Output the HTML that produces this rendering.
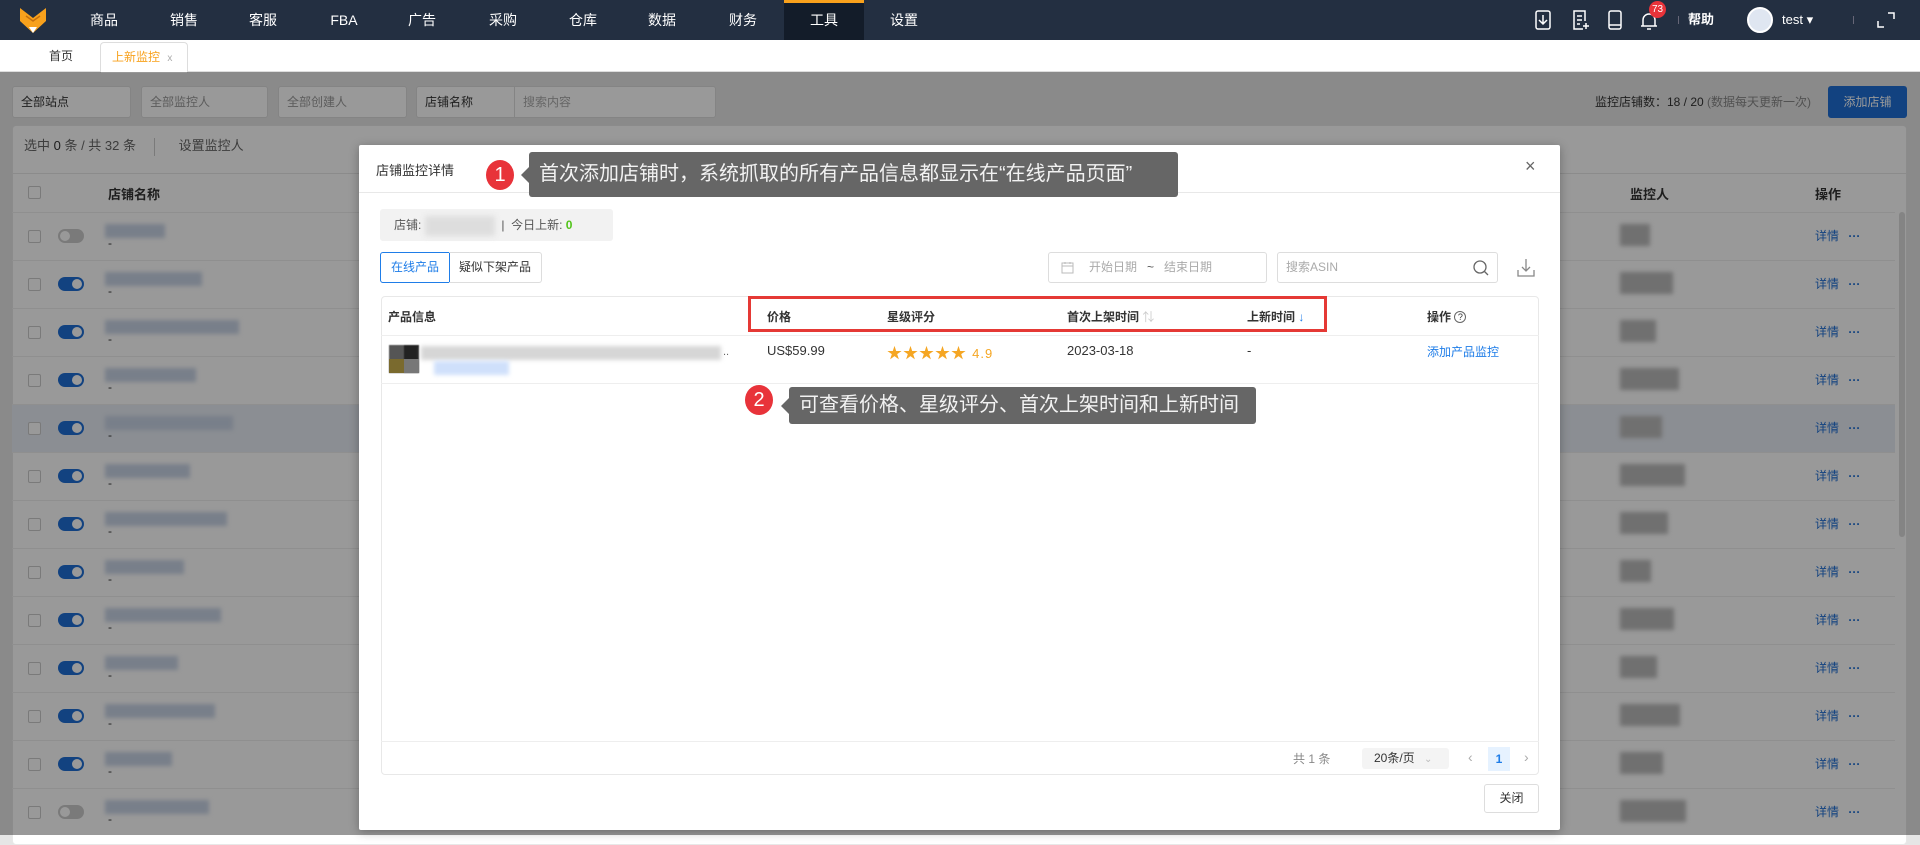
<!DOCTYPE html>
<html><head><meta charset="utf-8">
<style>
*{box-sizing:border-box;margin:0;padding:0}
body{width:1920px;height:835px;overflow:hidden;position:relative;font-family:"Liberation Sans","Noto Sans CJK SC",sans-serif;font-size:13px;color:#333;background:#e6e6e6}
.abs{position:absolute}
.nav{left:0;top:0;width:1920px;height:40px;background:#232f41}
.nav .it{position:absolute;top:0;height:40px;line-height:40px;width:80px;text-align:center;color:#fff;font-size:14px}
.tabs{top:40px;left:0;width:1920px;height:32px;background:#fff;border-bottom:1px solid #ddd}
.sel{height:32px;border:1px solid #dcdcdc;border-radius:3px;background:#fff;color:#999;font-size:12px;line-height:30px;padding-left:8px}
.card{left:12px;top:125px;width:1895px;height:720px;background:#fff;border:1px solid #e8e8e8;border-radius:4px}
.row{position:absolute;left:12px;width:1883px;height:48px;border-top:1px solid #eee}
.cb{position:absolute;left:28px;width:13px;height:13px;border:1px solid #ccc;border-radius:2px;background:#fff}
.tg{position:absolute;left:58px;width:26px;height:14px;border-radius:7px;background:#1f6fd6}
.tg:after{content:"";position:absolute;right:2px;top:2px;width:10px;height:10px;border-radius:5px;background:#fff}
.tg.off{background:#ccc}.tg.off:after{right:auto;left:2px}
.blur{position:absolute;background:#c9d4e6;filter:blur(2px)}
.gb{position:absolute;background:#bbb;filter:blur(2px)}
.overlay{left:0;top:72px;width:1920px;height:763px;background:rgba(0,0,0,.4)}
.modal{left:359px;top:145px;width:1201px;height:685px;background:#fff;border-radius:2px;box-shadow:0 2px 10px rgba(0,0,0,.3)}
.tip{background:#666;color:#f2f2f2;font-size:20px;border-radius:3px;padding-left:10px}
.tip:before{content:"";position:absolute;left:-8px;top:50%;margin-top:-8px;border:8px solid transparent;border-left:0;border-right-color:#666}
.num{width:28px;height:30px;border-radius:50%;background:#e8333a;color:#fff;font-size:20px;text-align:center;line-height:30px}
.star{color:#f5a623;font-size:15px;letter-spacing:1px}
</style></head><body>
<div class="abs nav">
  <svg class="abs" style="left:20px;top:8px" width="26" height="25" viewBox="0 0 26 25"><path d="M0 0 L13 10 L26 0 L26 13 L13 25 L0 13Z" fill="#f8a11c"/><path d="M9 19 L13 25 L17 19Z" fill="#fff"/><path d="M6 8 L13 13 L20 8" stroke="#c5700c" stroke-width="1.5" fill="none"/></svg>
  <div class="it" style="left:64px">商品</div><div class="it" style="left:144px">销售</div><div class="it" style="left:223px">客服</div><div class="it" style="left:304px">FBA</div><div class="it" style="left:382px">广告</div><div class="it" style="left:463px">采购</div><div class="it" style="left:543px">仓库</div><div class="it" style="left:622px">数据</div><div class="it" style="left:703px">财务</div>
  <div class="it" style="left:784px;background:#131c29;border-top:3px solid #f8a11c;line-height:34px">工具</div>
  <div class="it" style="left:864px">设置</div>
  <svg class="abs" style="left:1533px;top:10px" width="20" height="20" viewBox="0 0 20 20" fill="none" stroke="#fff" stroke-width="1.5"><rect x="3" y="1" width="14" height="18" rx="2"/><path d="M10 5v9M6 10l4 4 4-4"/></svg>
  <svg class="abs" style="left:1571px;top:10px" width="20" height="20" viewBox="0 0 20 20" fill="none" stroke="#fff" stroke-width="1.5"><path d="M12 19H3V1h11v10"/><path d="M6 6h5M6 10h5M6 14h3M15 13v6M12 16h6"/></svg>
  <svg class="abs" style="left:1606px;top:10px" width="18" height="20" viewBox="0 0 18 20" fill="none" stroke="#fff" stroke-width="1.5"><rect x="3" y="1" width="12" height="18" rx="2"/><path d="M3 15h12"/></svg>
  <svg class="abs" style="left:1640px;top:11px" width="18" height="20" viewBox="0 0 18 20" fill="none" stroke="#fff" stroke-width="1.5"><path d="M3 15V9a6 6 0 0 1 12 0v6zM1 15h16M7 18h4"/></svg>
  <div class="abs" style="left:1649px;top:1px;width:17px;height:17px;border-radius:9px;background:#e8333a;color:#fff;font-size:10px;text-align:center;line-height:17px">73</div>
  <div class="abs" style="left:1688px;top:0;line-height:40px;color:#fff;font-size:13px;font-weight:bold">帮助</div>
  <div class="abs" style="left:1678px;top:16px;width:1px;height:8px;background:#667"></div>
  <div class="abs" style="left:1747px;top:7px;width:26px;height:26px;border-radius:13px;background:#dfe6f1;border:2px solid #fff"></div>
  <div class="abs" style="left:1782px;top:0;line-height:40px;color:#fff;font-size:13px">test ▾</div>
  <div class="abs" style="left:1853px;top:16px;width:1px;height:8px;background:#667"></div>
  <svg class="abs" style="left:1877px;top:12px" width="18" height="16" viewBox="0 0 18 16" fill="none" stroke="#fff" stroke-width="1.5"><path d="M11 1h6v6M1 9v6h6"/></svg>
</div>
<div class="abs tabs">
  <div class="abs" style="left:49px;top:0;line-height:32px;font-size:12px">首页</div>
  <div class="abs" style="left:100px;top:2px;width:88px;height:31px;background:#fff;border:1px solid #ddd;border-bottom:none;border-radius:4px 4px 0 0;color:#f8a11c;font-size:12px;line-height:28px;padding-left:11px">上新监控 <span style="color:#aaa;font-size:10px;margin-left:4px">x</span></div>
</div>
<!-- background page -->
<div class="abs sel" style="left:12px;top:86px;width:119px;color:#333">全部站点</div>
<div class="abs sel" style="left:141px;top:86px;width:127px">全部监控人</div>
<div class="abs sel" style="left:278px;top:86px;width:129px">全部创建人</div>
<div class="abs sel" style="left:416px;top:86px;width:300px;color:#333">店铺名称<span style="position:absolute;left:97px;top:0;height:30px;border-left:1px solid #ddd;padding-left:8px;color:#aaa">搜索内容</span></div>
<div class="abs" style="left:1595px;top:86px;line-height:32px;font-size:12px">监控店铺数：18 / 20 <span style="color:#888">(数据每天更新一次)</span></div>
<div class="abs" style="left:1828px;top:86px;width:79px;height:32px;background:#1f6fd6;color:#fff;border-radius:3px;text-align:center;line-height:32px;font-size:12px">添加店铺</div>
<div class="abs card"></div>
<div class="abs" style="left:24px;top:134px;line-height:24px;font-size:13px;color:#666">选中 <b style="color:#333;font-weight:normal">0</b> 条 / 共 32 条 <span style="display:inline-block;width:1px;height:18px;background:#ccc;vertical-align:middle;margin:0 24px 0 14px"></span>设置监控人</div>
<div class="abs" style="left:12px;top:173px;width:1895px;height:1px;background:#e8e8e8"></div>
<div class="cb" style="top:186px"></div>
<div class="abs" style="left:108px;top:184px;font-weight:bold;font-size:13px">店铺名称</div>
<div class="abs" style="left:1630px;top:184px;font-weight:bold;font-size:13px">监控人</div>
<div class="abs" style="left:1815px;top:184px;font-weight:bold;font-size:13px">操作</div>
<div id="rows"></div>
<div class="abs" style="left:1899px;top:212px;width:6px;height:325px;background:#ddd;border-radius:3px"></div>
<script>
var h='';for(var i=0;i<13;i++){var y=212+48*i;h+='<div class="row" style="top:'+y+'px;'+(i==4?'background:#e8edf5':'')+'"></div><div class="cb" style="top:'+(y+18)+'px"></div><div class="tg'+(i==0||i==12?' off':'')+'" style="top:'+(y+17)+'px"></div><div class="blur" style="left:105px;top:'+(y+12)+'px;width:'+(60+((i*37)%80))+'px;height:14px"></div><div class="abs" style="left:108px;top:'+(y+24)+'px;font-size:12px">-</div><div class="gb" style="left:1620px;top:'+(y+12)+'px;width:'+(30+((i*23)%40))+'px;height:22px"></div><div class="abs" style="left:1815px;top:'+(y+15)+'px;color:#1f6fd6;font-size:12px">详情 <b style="margin-left:6px">···</b></div>';}
document.getElementById('rows').innerHTML=h;
</script>
<div class="abs overlay"></div>
<!-- modal -->
<div class="abs modal">
  <div class="abs" style="left:17px;top:15px;font-size:13px">店铺监控详情</div>
  <div class="abs" style="left:1166px;top:11px;font-size:18px;color:#666">×</div>
  <div class="abs" style="left:0;top:47px;width:1201px;height:1px;background:#e8e8e8"></div>
  <div class="abs" style="left:21px;top:64px;width:233px;height:32px;background:#f2f2f2;border-radius:3px;line-height:32px;padding-left:14px;font-size:12px;color:#555">店铺: <span style="display:inline-block;width:70px;height:20px;vertical-align:middle;background:#ddd;filter:blur(3px)"></span>&nbsp; |&nbsp; 今日上新: <b style="color:#52c41a">0</b></div>
  <div class="abs" style="left:21px;top:107px;width:70px;height:31px;border:1px solid #1f7de8;border-radius:3px 0 0 3px;color:#1f7de8;font-size:12px;text-align:center;line-height:29px">在线产品</div>
  <div class="abs" style="left:90px;top:107px;width:93px;height:31px;border:1px solid #ddd;border-left:none;border-radius:0 3px 3px 0;font-size:12px;text-align:center;line-height:29px">疑似下架产品</div>
  <div class="abs" style="left:689px;top:107px;width:219px;height:31px;border:1px solid #ddd;border-radius:3px;color:#aaa;font-size:12px;line-height:29px;padding-left:40px">开始日期 &nbsp;&nbsp;<span style="color:#555">~</span>&nbsp;&nbsp; 结束日期
    <svg style="position:absolute;left:12px;top:8px" width="13" height="13" viewBox="0 0 13 13" fill="none" stroke="#bbb"><rect x="1" y="2" width="11" height="10"/><path d="M1 5h11M4 1v2M9 1v2"/></svg></div>
  <div class="abs" style="left:918px;top:107px;width:221px;height:31px;border:1px solid #ddd;border-radius:3px;color:#aaa;font-size:12px;line-height:29px;padding-left:8px">搜索ASIN
    <svg style="position:absolute;right:8px;top:7px" width="16" height="16" viewBox="0 0 16 16" fill="none" stroke="#666" stroke-width="1.3"><circle cx="7" cy="7" r="6"/><path d="M11.5 11.5l3.5 3.5"/></svg></div>
  <svg class="abs" style="left:1158px;top:113px" width="18" height="20" viewBox="0 0 18 20" fill="none" stroke="#888" stroke-width="1.3"><path d="M9 1v12M5 9l4 4 4-4M1 12v6h16v-6"/></svg>
  <div class="abs" style="left:22px;top:151px;width:1158px;height:479px;border:1px solid #e8e8e8;border-radius:4px"></div>
  <div class="abs" style="left:22px;top:190px;width:1158px;height:1px;background:#eee"></div>
  <div class="abs" style="left:22px;top:238px;width:1158px;height:1px;background:#eee"></div>
  <div class="abs" style="left:22px;top:596px;width:1158px;height:1px;background:#eee"></div>
  <div class="abs" style="left:29px;top:163px;font-weight:bold;font-size:12px">产品信息</div>
  <div class="abs" style="left:408px;top:163px;font-weight:bold;font-size:12px">价格</div>
  <div class="abs" style="left:528px;top:163px;font-weight:bold;font-size:12px">星级评分</div>
  <div class="abs" style="left:708px;top:163px;font-weight:bold;font-size:12px">首次上架时间 <span style="color:#ccc;font-weight:normal">⇅</span></div>
  <div class="abs" style="left:888px;top:163px;font-weight:bold;font-size:12px">上新时间 <span style="color:#1f7de8;font-weight:normal">↓</span></div>
  <div class="abs" style="left:1068px;top:163px;font-weight:bold;font-size:12px">操作 <span style="display:inline-block;width:12px;height:12px;border:1px solid #666;border-radius:6px;font-size:9px;text-align:center;line-height:11px;font-weight:normal;vertical-align:1px">?</span></div>
  <div class="abs" style="left:389px;top:151px;width:579px;height:36px;border:3px solid #e53935"></div>
  <div class="abs" style="left:30px;top:200px;width:30px;height:28px;background:linear-gradient(90deg,#555 50%,#222 50%);filter:blur(.5px)"></div>
  <div class="abs" style="left:30px;top:214px;width:30px;height:14px;background:linear-gradient(90deg,#7a6a2e 50%,#777 50%)"></div>
  <div class="gb" style="left:62px;top:201px;width:300px;height:14px;background:#d6d6d6"></div>
  <div class="abs" style="left:364px;top:201px;font-size:11px;color:#666">..</div>
  <div class="blur" style="left:75px;top:216px;width:75px;height:14px;background:#cfe0fb"></div>
  <div class="abs" style="left:408px;top:198px;font-size:13px">US$59.99</div>
  <div class="abs star" style="left:528px;top:197px">★★★★★ <span style="font-size:13px">4.9</span></div>
  <div class="abs" style="left:708px;top:198px;font-size:13px">2023-03-18</div>
  <div class="abs" style="left:888px;top:198px;font-size:13px">-</div>
  <div class="abs" style="left:1068px;top:198px;font-size:12px;color:#1f7de8">添加产品监控</div>
  <div class="abs" style="left:934px;top:606px;font-size:12px;color:#888;line-height:16px">共 1 条</div>
  <div class="abs" style="left:1003px;top:603px;width:87px;height:21px;background:#f4f4f4;border-radius:3px;font-size:12px;line-height:21px;padding-left:12px">20条/页 <span style="color:#bbb;font-size:10px;margin-left:6px">⌄</span></div>
  <div class="abs" style="left:1109px;top:604px;color:#aaa;font-size:14px">‹</div>
  <div class="abs" style="left:1129px;top:602px;width:22px;height:24px;background:#e6f2ff;color:#1f7de8;font-weight:bold;text-align:center;line-height:24px;font-size:12px">1</div>
  <div class="abs" style="left:1165px;top:604px;color:#aaa;font-size:14px">›</div>
  <div class="abs" style="left:1125px;top:639px;width:55px;height:29px;border:1px solid #ddd;border-radius:3px;font-size:12px;text-align:center;line-height:27px">关闭</div>
</div>
<div class="abs num" style="left:486px;top:160px">1</div>
<div class="abs tip" style="left:529px;top:152px;width:649px;height:45px;line-height:45px">首次添加店铺时，系统抓取的所有产品信息都显示在“在线产品页面”</div>
<div class="abs num" style="left:745px;top:385px">2</div>
<div class="abs tip" style="left:789px;top:387px;width:467px;height:37px;line-height:37px">可查看价格、星级评分、首次上架时间和上新时间</div>
</body></html>
